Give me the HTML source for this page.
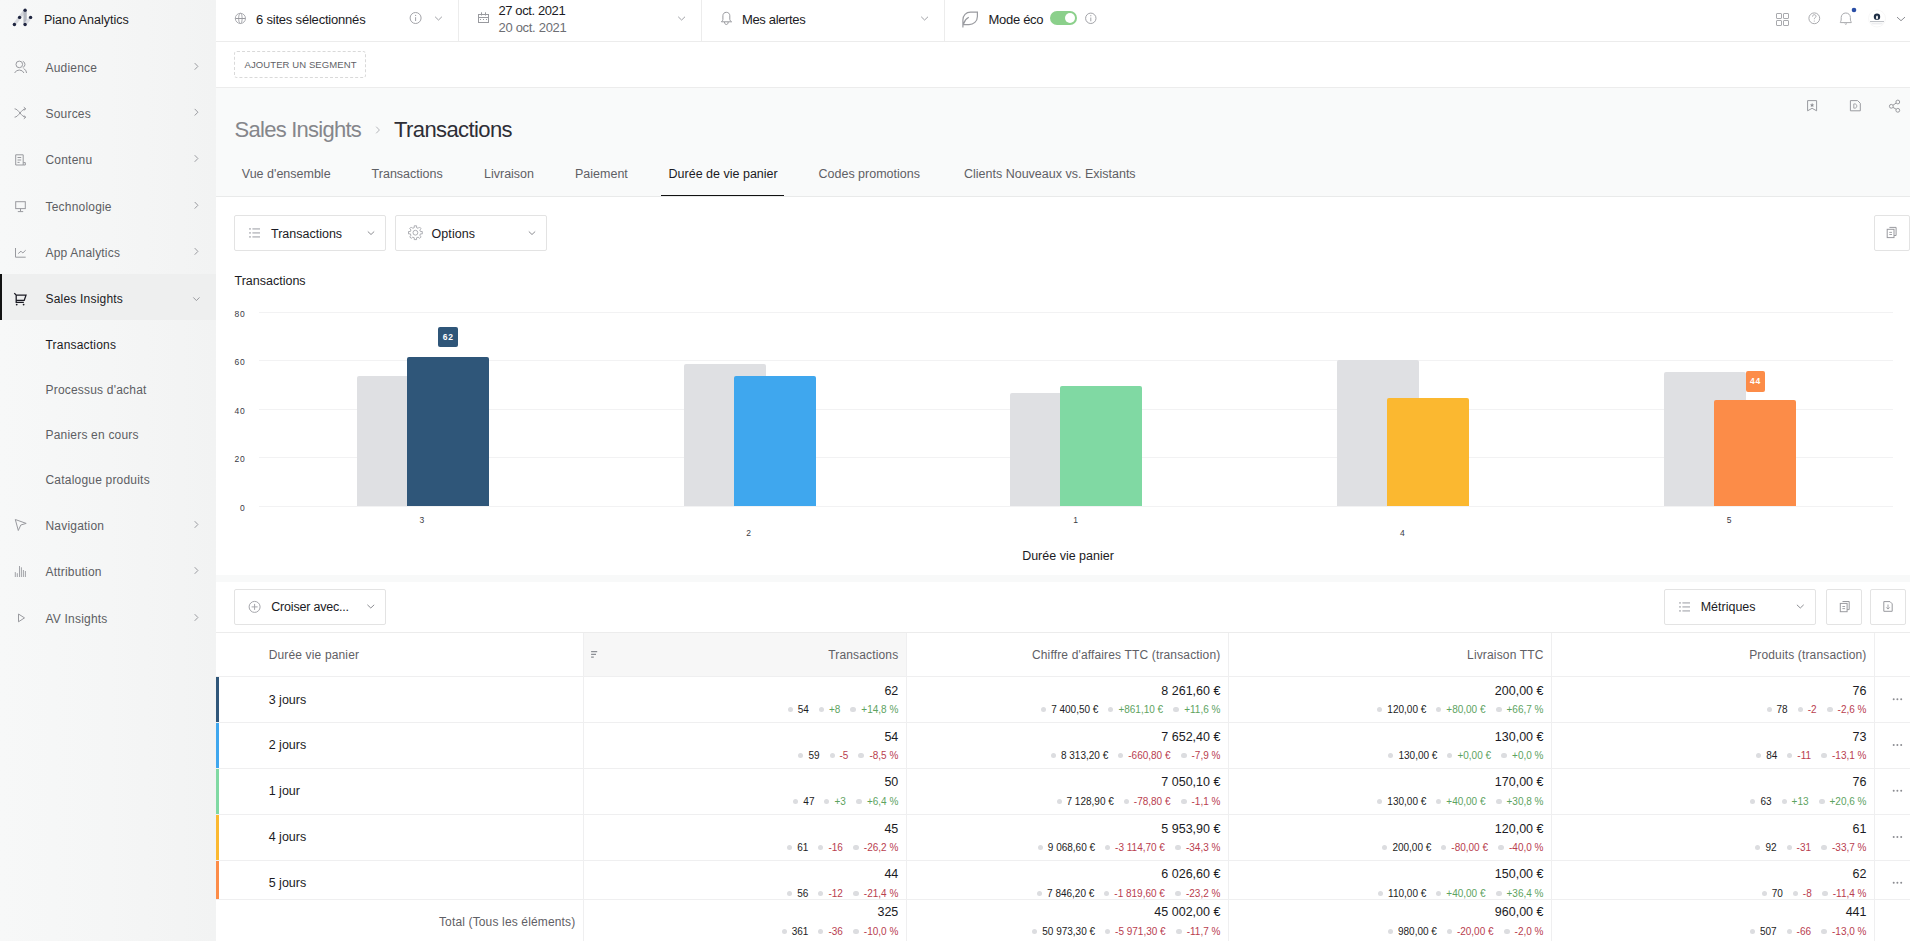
<!DOCTYPE html>
<html><head><meta charset="utf-8"><title>Piano Analytics</title>
<style>
html,body{margin:0;padding:0;width:1910px;height:941px;overflow:hidden;background:#fff;font-family:"Liberation Sans", sans-serif;}
.t{position:absolute;white-space:nowrap;}
.b{position:absolute;box-sizing:border-box;}
svg.b{overflow:visible;}
.sub{font-size:10px;line-height:10px;}
.sub i{display:inline-block;width:5px;height:5px;border-radius:2.5px;background:#dcdde0;margin:0 5px 0 10px;vertical-align:1px;}
.sub i.d1{margin-left:0;}
.sub i.d3{width:6px;}
</style></head><body>
<div class="b" style="left:0px;top:0px;width:216px;height:941px;background:linear-gradient(90deg,#f7f8f8 0%,#f5f6f6 50%,#f2f3f3 100%);"></div><div class="b" style="left:216px;top:0px;width:1694px;height:42px;background:#fff;border-bottom:1px solid #ececec;"></div><div class="b" style="left:216px;top:42px;width:1694px;height:46px;background:#fff;border-bottom:1px solid #ececec;"></div><div class="b" style="left:216px;top:88px;width:1694px;height:109px;background:#f9fafa;border-bottom:1px solid #e9eaea;"></div><div class="b" style="left:216px;top:197px;width:1694px;height:378px;background:#fff;"></div><div class="b" style="left:216px;top:575px;width:1694px;height:7px;background:#f8f9f9;"></div><div class="b" style="left:216px;top:582px;width:1694px;height:359px;background:#fff;"></div><div class="t" style="top:13.62px;font-size:12.5px;line-height:12.5px;color:#1b1b24;left:44.00px;">Piano Analytics</div><div class="t" style="top:61.74px;font-size:12px;line-height:12px;color:#5d5e63;letter-spacing:0.2px;left:45.50px;">Audience</div><div class="t" style="top:107.54px;font-size:12px;line-height:12px;color:#5d5e63;letter-spacing:0.2px;left:45.50px;">Sources</div><div class="t" style="top:153.84px;font-size:12px;line-height:12px;color:#5d5e63;letter-spacing:0.2px;left:45.50px;">Contenu</div><div class="t" style="top:200.64px;font-size:12px;line-height:12px;color:#5d5e63;letter-spacing:0.2px;left:45.50px;">Technologie</div><div class="t" style="top:246.74px;font-size:12px;line-height:12px;color:#5d5e63;letter-spacing:0.2px;left:45.50px;">App Analytics</div><div class="b" style="left:0px;top:274px;width:216px;height:46px;background:#eeefef;"></div><div class="b" style="left:0px;top:274px;width:2px;height:46px;background:#111;"></div><div class="t" style="top:292.84px;font-size:12px;line-height:12px;color:#1b1b24;letter-spacing:0.2px;left:45.50px;">Sales Insights</div><div class="t" style="top:338.54px;font-size:12px;line-height:12px;color:#1b1b24;letter-spacing:0.2px;left:45.50px;">Transactions</div><div class="t" style="top:384.24px;font-size:12px;line-height:12px;color:#5d5e63;letter-spacing:0.2px;left:45.50px;">Processus d&#x27;achat</div><div class="t" style="top:429.24px;font-size:12px;line-height:12px;color:#5d5e63;letter-spacing:0.2px;left:45.50px;">Paniers en cours</div><div class="t" style="top:474.04px;font-size:12px;line-height:12px;color:#5d5e63;letter-spacing:0.2px;left:45.50px;">Catalogue produits</div><div class="t" style="top:519.84px;font-size:12px;line-height:12px;color:#5d5e63;letter-spacing:0.2px;left:45.50px;">Navigation</div><div class="t" style="top:565.84px;font-size:12px;line-height:12px;color:#5d5e63;letter-spacing:0.2px;left:45.50px;">Attribution</div><div class="t" style="top:612.84px;font-size:12px;line-height:12px;color:#5d5e63;letter-spacing:0.2px;left:45.50px;">AV Insights</div><div class="t" style="top:13.00px;font-size:13px;line-height:13px;color:#1b1b24;letter-spacing:-0.2px;left:256.00px;">6 sites sélectionnés</div><div class="b" style="left:458px;top:0px;width:1px;height:41px;background:#ececec;"></div><div class="t" style="top:4.00px;font-size:13px;line-height:13px;color:#1b1b24;letter-spacing:-0.4px;left:498.50px;">27 oct. 2021</div><div class="t" style="top:20.80px;font-size:13px;line-height:13px;color:#6d6e73;letter-spacing:-0.3px;left:498.50px;">20 oct. 2021</div><div class="b" style="left:701px;top:0px;width:1px;height:41px;background:#ececec;"></div><div class="t" style="top:13.00px;font-size:13px;line-height:13px;color:#1b1b24;letter-spacing:-0.35px;left:742.00px;">Mes alertes</div><div class="b" style="left:944px;top:0px;width:1px;height:41px;background:#ececec;"></div><div class="t" style="top:13.00px;font-size:13px;line-height:13px;color:#1b1b24;letter-spacing:-0.3px;left:988.50px;">Mode éco</div><div class="b" style="left:1050px;top:11px;width:27px;height:14px;background:#8bd08b;border-radius:7px;"></div><div class="b" style="left:1065px;top:13px;width:10px;height:10px;background:#fff;border-radius:50%;"></div><div class="b" style="left:234px;top:51px;width:132px;height:27px;border:1px dashed #d9d9d9;border-radius:3px;"></div><div class="t" style="top:60.26px;font-size:9.5px;line-height:9.5px;color:#606166;letter-spacing:0.1px;left:244.50px;">AJOUTER UN SEGMENT</div><div class="t" style="top:118.58px;font-size:22px;line-height:22px;color:#85868b;letter-spacing:-0.75px;left:234.60px;">Sales Insights</div><div class="t" style="top:118.58px;font-size:22px;line-height:22px;color:#2e2e36;letter-spacing:-0.6px;left:394.00px;">Transactions</div><div class="t" style="top:167.62px;font-size:12.5px;line-height:12.5px;color:#5f6065;left:241.80px;">Vue d&#x27;ensemble</div><div class="t" style="top:167.62px;font-size:12.5px;line-height:12.5px;color:#5f6065;left:371.60px;">Transactions</div><div class="t" style="top:167.62px;font-size:12.5px;line-height:12.5px;color:#5f6065;left:484.00px;">Livraison</div><div class="t" style="top:167.62px;font-size:12.5px;line-height:12.5px;color:#5f6065;left:575.00px;">Paiement</div><div class="t" style="top:167.62px;font-size:12.5px;line-height:12.5px;color:#1b1b24;left:668.60px;">Durée de vie panier</div><div class="t" style="top:167.62px;font-size:12.5px;line-height:12.5px;color:#5f6065;left:818.50px;">Codes promotions</div><div class="t" style="top:167.62px;font-size:12.5px;line-height:12.5px;color:#5f6065;left:964.00px;">Clients Nouveaux vs. Existants</div><div class="b" style="left:661px;top:194.8px;width:123px;height:1.6px;background:#111;"></div><div class="b" style="left:234px;top:215px;width:152px;height:36px;border:1px solid #e3e3e3;border-radius:2px;background:#fff;"></div><div class="t" style="top:227.72px;font-size:12.5px;line-height:12.5px;color:#1b1b24;left:271.00px;">Transactions</div><div class="b" style="left:395px;top:215px;width:152px;height:36px;border:1px solid #e3e3e3;border-radius:2px;background:#fff;"></div><div class="t" style="top:227.72px;font-size:12.5px;line-height:12.5px;color:#1b1b24;letter-spacing:0.05px;left:431.60px;">Options</div><div class="b" style="left:1873.5px;top:215px;width:36px;height:36px;border:1px solid #e3e3e3;border-radius:2px;background:#fff;"></div><div class="t" style="top:274.62px;font-size:12.5px;line-height:12.5px;color:#1b1b24;left:234.50px;">Transactions</div><div class="b" style="left:259px;top:506px;width:1634px;height:1px;background:#f2f2f3;"></div><div class="t" style="top:503.60px;font-size:8.5px;line-height:8.5px;color:#3a3a44;letter-spacing:0.9px;right:1664.30px;">0</div><div class="b" style="left:259px;top:457px;width:1634px;height:1px;background:#f2f2f3;"></div><div class="t" style="top:455.10px;font-size:8.5px;line-height:8.5px;color:#3a3a44;letter-spacing:0.9px;right:1664.30px;">20</div><div class="b" style="left:259px;top:409px;width:1634px;height:1px;background:#f2f2f3;"></div><div class="t" style="top:406.60px;font-size:8.5px;line-height:8.5px;color:#3a3a44;letter-spacing:0.9px;right:1664.30px;">40</div><div class="b" style="left:259px;top:360px;width:1634px;height:1px;background:#f2f2f3;"></div><div class="t" style="top:358.10px;font-size:8.5px;line-height:8.5px;color:#3a3a44;letter-spacing:0.9px;right:1664.30px;">60</div><div class="b" style="left:259px;top:312px;width:1634px;height:1px;background:#f2f2f3;"></div><div class="t" style="top:309.60px;font-size:8.5px;line-height:8.5px;color:#3a3a44;letter-spacing:0.9px;right:1664.30px;">80</div><div class="b" style="left:356.5px;top:376.4px;width:82px;height:129.6px;background:#dfe0e3;border-radius:2px 2px 0 0;"></div><div class="b" style="left:407px;top:357.20000000000005px;width:82px;height:148.79999999999998px;background:#2f5679;border-radius:2px 2px 0 0;"></div><div class="t" style="top:516.30px;font-size:8.5px;line-height:8.5px;color:#3a3a44;letter-spacing:0.9px;left:422.40px;transform:translateX(-50%);">3</div><div class="b" style="left:683.5px;top:364.4px;width:82px;height:141.6px;background:#dfe0e3;border-radius:2px 2px 0 0;"></div><div class="b" style="left:734px;top:376.4px;width:82px;height:129.6px;background:#3fa7ee;border-radius:2px 2px 0 0;"></div><div class="t" style="top:528.50px;font-size:8.5px;line-height:8.5px;color:#3a3a44;letter-spacing:0.9px;left:749.20px;transform:translateX(-50%);">2</div><div class="b" style="left:1010.0px;top:393.2px;width:82px;height:112.8px;background:#dfe0e3;border-radius:2px 2px 0 0;"></div><div class="b" style="left:1060px;top:386.0px;width:82px;height:120.0px;background:#80d9a3;border-radius:2px 2px 0 0;"></div><div class="t" style="top:516.30px;font-size:8.5px;line-height:8.5px;color:#3a3a44;letter-spacing:0.9px;left:1076.00px;transform:translateX(-50%);">1</div><div class="b" style="left:1337.0px;top:359.6px;width:82px;height:146.4px;background:#dfe0e3;border-radius:2px 2px 0 0;"></div><div class="b" style="left:1387px;top:398.0px;width:82px;height:108.0px;background:#fbb830;border-radius:2px 2px 0 0;"></div><div class="t" style="top:528.50px;font-size:8.5px;line-height:8.5px;color:#3a3a44;letter-spacing:0.9px;left:1402.80px;transform:translateX(-50%);">4</div><div class="b" style="left:1664.0px;top:371.6px;width:82px;height:134.4px;background:#dfe0e3;border-radius:2px 2px 0 0;"></div><div class="b" style="left:1714px;top:400.4px;width:82px;height:105.6px;background:#fc8c48;border-radius:2px 2px 0 0;"></div><div class="t" style="top:516.30px;font-size:8.5px;line-height:8.5px;color:#3a3a44;letter-spacing:0.9px;left:1729.60px;transform:translateX(-50%);">5</div><div class="b" style="left:438px;top:327px;width:20px;height:20px;background:#2f5679;border-radius:2px;"></div><div class="t" style="top:333.00px;font-size:8.5px;line-height:8.5px;color:#fff;letter-spacing:0.9px;font-weight:700;left:448.30px;transform:translateX(-50%);">62</div><div class="b" style="left:1745.5px;top:371px;width:19.5px;height:20.5px;background:#fc8c48;border-radius:2px;"></div><div class="t" style="top:377.00px;font-size:8.5px;line-height:8.5px;color:#fff;letter-spacing:0.9px;font-weight:700;left:1755.60px;transform:translateX(-50%);">44</div><div class="t" style="top:550.42px;font-size:12.5px;line-height:12.5px;color:#1b1b24;left:1068.00px;transform:translateX(-50%);">Durée vie panier</div><div class="b" style="left:234px;top:589px;width:152px;height:36px;border:1px solid #e3e3e3;border-radius:2px;background:#fff;"></div><div class="t" style="top:601.42px;font-size:12.5px;line-height:12.5px;color:#1b1b24;letter-spacing:-0.2px;left:271.30px;">Croiser avec...</div><div class="b" style="left:1664px;top:589px;width:152px;height:36px;border:1px solid #e3e3e3;border-radius:2px;background:#fff;"></div><div class="t" style="top:601.42px;font-size:12.5px;line-height:12.5px;color:#1b1b24;left:1700.70px;">Métriques</div><div class="b" style="left:1826px;top:589px;width:36px;height:36px;border:1px solid #e3e3e3;border-radius:2px;background:#fff;"></div><div class="b" style="left:1870px;top:589px;width:36px;height:36px;border:1px solid #e3e3e3;border-radius:2px;background:#fff;"></div><div class="b" style="left:216px;top:632px;width:1694px;height:1px;background:#ececec;"></div><div class="b" style="left:584px;top:633px;width:322px;height:44px;background:#f7f7f7;"></div><div class="b" style="left:216px;top:676px;width:1694px;height:1px;background:#efeff0;"></div><div class="b" style="left:216px;top:722px;width:1694px;height:1px;background:#efeff0;"></div><div class="b" style="left:216px;top:768px;width:1694px;height:1px;background:#efeff0;"></div><div class="b" style="left:216px;top:814px;width:1694px;height:1px;background:#efeff0;"></div><div class="b" style="left:216px;top:860px;width:1694px;height:1px;background:#efeff0;"></div><div class="b" style="left:216px;top:899px;width:1694px;height:1px;background:#efeff0;"></div><div class="b" style="left:583px;top:633px;width:1px;height:308px;background:#efeff0;"></div><div class="b" style="left:906px;top:633px;width:1px;height:308px;background:#efeff0;"></div><div class="b" style="left:1228px;top:633px;width:1px;height:308px;background:#efeff0;"></div><div class="b" style="left:1551px;top:633px;width:1px;height:308px;background:#efeff0;"></div><div class="b" style="left:1874px;top:633px;width:1px;height:308px;background:#efeff0;"></div><div class="t" style="top:649.04px;font-size:12px;line-height:12px;color:#5f6065;letter-spacing:0.15px;left:268.70px;">Durée vie panier</div><div class="t" style="top:649.04px;font-size:12px;line-height:12px;color:#5f6065;letter-spacing:0.15px;right:1011.70px;">Transactions</div><div class="t" style="top:649.04px;font-size:12px;line-height:12px;color:#5f6065;letter-spacing:0.15px;right:689.60px;">Chiffre d&#x27;affaires TTC (transaction)</div><div class="t" style="top:649.04px;font-size:12px;line-height:12px;color:#5f6065;letter-spacing:0.15px;right:366.50px;">Livraison TTC</div><div class="t" style="top:649.04px;font-size:12px;line-height:12px;color:#5f6065;letter-spacing:0.15px;right:43.50px;">Produits (transaction)</div><div class="b" style="left:216px;top:677px;width:3px;height:44.799999999999955px;background:#2f5679;"></div><div class="t" style="top:693.62px;font-size:12.5px;line-height:12.5px;color:#1b1b24;left:268.70px;">3 jours</div><div class="t" style="top:684.82px;font-size:12.5px;line-height:12.5px;color:#1b1b24;right:1011.70px;">62</div><div class="t sub" style="right:1011.70px;top:705.40px;"><i class="d1"></i><span style="color:#1d1d24">54</span><i class="d2"></i><span style="color:#5ea35f">+8</span><i class="d3"></i><span style="color:#5ea35f">+14,8 %</span></div><div class="t" style="top:684.82px;font-size:12.5px;line-height:12.5px;color:#1b1b24;right:689.60px;">8 261,60 €</div><div class="t sub" style="right:689.60px;top:705.40px;"><i class="d1"></i><span style="color:#1d1d24">7 400,50 €</span><i class="d2"></i><span style="color:#5ea35f">+861,10 €</span><i class="d3"></i><span style="color:#5ea35f">+11,6 %</span></div><div class="t" style="top:684.82px;font-size:12.5px;line-height:12.5px;color:#1b1b24;right:366.50px;">200,00 €</div><div class="t sub" style="right:366.50px;top:705.40px;"><i class="d1"></i><span style="color:#1d1d24">120,00 €</span><i class="d2"></i><span style="color:#5ea35f">+80,00 €</span><i class="d3"></i><span style="color:#5ea35f">+66,7 %</span></div><div class="t" style="top:684.82px;font-size:12.5px;line-height:12.5px;color:#1b1b24;right:43.50px;">76</div><div class="t sub" style="right:43.50px;top:705.40px;"><i class="d1"></i><span style="color:#1d1d24">78</span><i class="d2"></i><span style="color:#b9404f">-2</span><i class="d3"></i><span style="color:#b9404f">-2,6 %</span></div><div class="b" style="left:216px;top:723px;width:3px;height:44.799999999999955px;background:#3fa7ee;"></div><div class="t" style="top:739.42px;font-size:12.5px;line-height:12.5px;color:#1b1b24;left:268.70px;">2 jours</div><div class="t" style="top:730.62px;font-size:12.5px;line-height:12.5px;color:#1b1b24;right:1011.70px;">54</div><div class="t sub" style="right:1011.70px;top:751.20px;"><i class="d1"></i><span style="color:#1d1d24">59</span><i class="d2"></i><span style="color:#b9404f">-5</span><i class="d3"></i><span style="color:#b9404f">-8,5 %</span></div><div class="t" style="top:730.62px;font-size:12.5px;line-height:12.5px;color:#1b1b24;right:689.60px;">7 652,40 €</div><div class="t sub" style="right:689.60px;top:751.20px;"><i class="d1"></i><span style="color:#1d1d24">8 313,20 €</span><i class="d2"></i><span style="color:#b9404f">-660,80 €</span><i class="d3"></i><span style="color:#b9404f">-7,9 %</span></div><div class="t" style="top:730.62px;font-size:12.5px;line-height:12.5px;color:#1b1b24;right:366.50px;">130,00 €</div><div class="t sub" style="right:366.50px;top:751.20px;"><i class="d1"></i><span style="color:#1d1d24">130,00 €</span><i class="d2"></i><span style="color:#5ea35f">+0,00 €</span><i class="d3"></i><span style="color:#5ea35f">+0,0 %</span></div><div class="t" style="top:730.62px;font-size:12.5px;line-height:12.5px;color:#1b1b24;right:43.50px;">73</div><div class="t sub" style="right:43.50px;top:751.20px;"><i class="d1"></i><span style="color:#1d1d24">84</span><i class="d2"></i><span style="color:#b9404f">-11</span><i class="d3"></i><span style="color:#b9404f">-13,1 %</span></div><div class="b" style="left:216px;top:769px;width:3px;height:45.10000000000002px;background:#80d9a3;"></div><div class="t" style="top:785.22px;font-size:12.5px;line-height:12.5px;color:#1b1b24;left:268.70px;">1 jour</div><div class="t" style="top:776.42px;font-size:12.5px;line-height:12.5px;color:#1b1b24;right:1011.70px;">50</div><div class="t sub" style="right:1011.70px;top:797.00px;"><i class="d1"></i><span style="color:#1d1d24">47</span><i class="d2"></i><span style="color:#5ea35f">+3</span><i class="d3"></i><span style="color:#5ea35f">+6,4 %</span></div><div class="t" style="top:776.42px;font-size:12.5px;line-height:12.5px;color:#1b1b24;right:689.60px;">7 050,10 €</div><div class="t sub" style="right:689.60px;top:797.00px;"><i class="d1"></i><span style="color:#1d1d24">7 128,90 €</span><i class="d2"></i><span style="color:#b9404f">-78,80 €</span><i class="d3"></i><span style="color:#b9404f">-1,1 %</span></div><div class="t" style="top:776.42px;font-size:12.5px;line-height:12.5px;color:#1b1b24;right:366.50px;">170,00 €</div><div class="t sub" style="right:366.50px;top:797.00px;"><i class="d1"></i><span style="color:#1d1d24">130,00 €</span><i class="d2"></i><span style="color:#5ea35f">+40,00 €</span><i class="d3"></i><span style="color:#5ea35f">+30,8 %</span></div><div class="t" style="top:776.42px;font-size:12.5px;line-height:12.5px;color:#1b1b24;right:43.50px;">76</div><div class="t sub" style="right:43.50px;top:797.00px;"><i class="d1"></i><span style="color:#1d1d24">63</span><i class="d2"></i><span style="color:#5ea35f">+13</span><i class="d3"></i><span style="color:#5ea35f">+20,6 %</span></div><div class="b" style="left:216px;top:815px;width:3px;height:44.89999999999998px;background:#fbb830;"></div><div class="t" style="top:831.32px;font-size:12.5px;line-height:12.5px;color:#1b1b24;left:268.70px;">4 jours</div><div class="t" style="top:822.52px;font-size:12.5px;line-height:12.5px;color:#1b1b24;right:1011.70px;">45</div><div class="t sub" style="right:1011.70px;top:843.10px;"><i class="d1"></i><span style="color:#1d1d24">61</span><i class="d2"></i><span style="color:#b9404f">-16</span><i class="d3"></i><span style="color:#b9404f">-26,2 %</span></div><div class="t" style="top:822.52px;font-size:12.5px;line-height:12.5px;color:#1b1b24;right:689.60px;">5 953,90 €</div><div class="t sub" style="right:689.60px;top:843.10px;"><i class="d1"></i><span style="color:#1d1d24">9 068,60 €</span><i class="d2"></i><span style="color:#b9404f">-3 114,70 €</span><i class="d3"></i><span style="color:#b9404f">-34,3 %</span></div><div class="t" style="top:822.52px;font-size:12.5px;line-height:12.5px;color:#1b1b24;right:366.50px;">120,00 €</div><div class="t sub" style="right:366.50px;top:843.10px;"><i class="d1"></i><span style="color:#1d1d24">200,00 €</span><i class="d2"></i><span style="color:#b9404f">-80,00 €</span><i class="d3"></i><span style="color:#b9404f">-40,0 %</span></div><div class="t" style="top:822.52px;font-size:12.5px;line-height:12.5px;color:#1b1b24;right:43.50px;">61</div><div class="t sub" style="right:43.50px;top:843.10px;"><i class="d1"></i><span style="color:#1d1d24">92</span><i class="d2"></i><span style="color:#b9404f">-31</span><i class="d3"></i><span style="color:#b9404f">-33,7 %</span></div><div class="b" style="left:216px;top:861px;width:3px;height:38.0px;background:#fc8c48;"></div><div class="t" style="top:877.22px;font-size:12.5px;line-height:12.5px;color:#1b1b24;left:268.70px;">5 jours</div><div class="t" style="top:868.42px;font-size:12.5px;line-height:12.5px;color:#1b1b24;right:1011.70px;">44</div><div class="t sub" style="right:1011.70px;top:889.00px;"><i class="d1"></i><span style="color:#1d1d24">56</span><i class="d2"></i><span style="color:#b9404f">-12</span><i class="d3"></i><span style="color:#b9404f">-21,4 %</span></div><div class="t" style="top:868.42px;font-size:12.5px;line-height:12.5px;color:#1b1b24;right:689.60px;">6 026,60 €</div><div class="t sub" style="right:689.60px;top:889.00px;"><i class="d1"></i><span style="color:#1d1d24">7 846,20 €</span><i class="d2"></i><span style="color:#b9404f">-1 819,60 €</span><i class="d3"></i><span style="color:#b9404f">-23,2 %</span></div><div class="t" style="top:868.42px;font-size:12.5px;line-height:12.5px;color:#1b1b24;right:366.50px;">150,00 €</div><div class="t sub" style="right:366.50px;top:889.00px;"><i class="d1"></i><span style="color:#1d1d24">110,00 €</span><i class="d2"></i><span style="color:#5ea35f">+40,00 €</span><i class="d3"></i><span style="color:#5ea35f">+36,4 %</span></div><div class="t" style="top:868.42px;font-size:12.5px;line-height:12.5px;color:#1b1b24;right:43.50px;">62</div><div class="t sub" style="right:43.50px;top:889.00px;"><i class="d1"></i><span style="color:#1d1d24">70</span><i class="d2"></i><span style="color:#b9404f">-8</span><i class="d3"></i><span style="color:#b9404f">-11,4 %</span></div><div class="t" style="top:915.74px;font-size:12px;line-height:12px;color:#5f6065;letter-spacing:0.15px;right:1334.60px;">Total (Tous les éléments)</div><div class="t" style="top:906.42px;font-size:12.5px;line-height:12.5px;color:#1b1b24;right:1011.70px;">325</div><div class="t sub" style="right:1011.70px;top:927.10px;"><i class="d1"></i><span style="color:#1d1d24">361</span><i class="d2"></i><span style="color:#b9404f">-36</span><i class="d3"></i><span style="color:#b9404f">-10,0 %</span></div><div class="t" style="top:906.42px;font-size:12.5px;line-height:12.5px;color:#1b1b24;right:689.60px;">45 002,00 €</div><div class="t sub" style="right:689.60px;top:927.10px;"><i class="d1"></i><span style="color:#1d1d24">50 973,30 €</span><i class="d2"></i><span style="color:#b9404f">-5 971,30 €</span><i class="d3"></i><span style="color:#b9404f">-11,7 %</span></div><div class="t" style="top:906.42px;font-size:12.5px;line-height:12.5px;color:#1b1b24;right:366.50px;">960,00 €</div><div class="t sub" style="right:366.50px;top:927.10px;"><i class="d1"></i><span style="color:#1d1d24">980,00 €</span><i class="d2"></i><span style="color:#b9404f">-20,00 €</span><i class="d3"></i><span style="color:#b9404f">-2,0 %</span></div><div class="t" style="top:906.42px;font-size:12.5px;line-height:12.5px;color:#1b1b24;right:43.50px;">441</div><div class="t sub" style="right:43.50px;top:927.10px;"><i class="d1"></i><span style="color:#1d1d24">507</span><i class="d2"></i><span style="color:#b9404f">-66</span><i class="d3"></i><span style="color:#b9404f">-13,0 %</span></div><svg class="b" style="left:0;top:0" width="1910" height="941" viewBox="0 0 1910 941"><line x1="14.4" y1="24.5" x2="25.1" y2="10.25" stroke="#d6d8dd" stroke-width="3"/><line x1="25.1" y1="10.25" x2="25.1" y2="24.5" stroke="#b3b7c0" stroke-width="3.3"/><line x1="25.1" y1="24.5" x2="30.6" y2="17.4" stroke="#dcdee3" stroke-width="3"/><circle cx="14.4" cy="24.5" r="1.7" fill="#1f2540"/><circle cx="19.6" cy="17.4" r="1.7" fill="#1f2540"/><circle cx="25.1" cy="10.25" r="1.7" fill="#1f2540"/><circle cx="25.1" cy="24.5" r="1.7" fill="#1f2540"/><circle cx="30.6" cy="17.4" r="1.7" fill="#1f2540"/><circle cx="19.3" cy="64.4" r="3.3" stroke="#999a9f" stroke-width="1" fill="none"/><path d="M22.8 61.3 A3.3 3.3 0 0 1 22.8 67.5" stroke="#999a9f" stroke-width="1" fill="none"/><path d="M14.6 73 A5.2 5.2 0 0 1 24 73" stroke="#999a9f" stroke-width="1" fill="none"/><path d="M23.6 68.6 A5 5 0 0 1 26.6 73" stroke="#999a9f" stroke-width="1" fill="none"/><path d="M14.6 108.8 C18.5 108.8 21.5 117.2 25.6 117.2 M14.6 117.2 C18.5 117.2 21.5 108.8 25.6 108.8" stroke="#999a9f" stroke-width="1" fill="none"/><path d="M23.8 107.2 L25.8 108.8 L23.8 110.4 M23.8 115.6 L25.8 117.2 L23.8 118.8" stroke="#999a9f" stroke-width="1" fill="none"/><path d="M15.7 154.8 H23.2 V165 H15.7 Z" stroke="#999a9f" stroke-width="1" fill="none"/><path d="M23.2 162.6 H25.3 V165 H23.2" stroke="#999a9f" stroke-width="1" fill="none"/><path d="M17.5 157.5 H21.2 M17.5 160 H21.2 M17.5 162.4 H19.6" stroke="#999a9f" stroke-width="1" fill="none"/><rect x="15.7" y="201.7" width="9.6" height="6.9" stroke="#999a9f" stroke-width="1" fill="none"/><path d="M20.5 208.6 V211.3 M17.8 211.6 H23.2" stroke="#999a9f" stroke-width="1" fill="none"/><path d="M15.5 248 V257.2 H25.7" stroke="#999a9f" stroke-width="1" fill="none"/><polyline points="18.2,253.6 21,251.2 22.8,253 25.7,250.2" stroke="#999a9f" stroke-width="1" fill="none"/><path d="M14.3 293.1 L16.2 295.2 H26 L24.2 300.4 H16.6 M16.2 295.2 V302.4 H23.8" stroke="#1b1b24" stroke-width="1.3" fill="none"/><circle cx="16.7" cy="304.6" r="0.9" fill="#1b1b24"/><circle cx="23.6" cy="304.6" r="0.9" fill="#1b1b24"/><path d="M15.3 519.5 L26.2 523.4 L20.8 525 L18.3 530.5 Z" stroke="#999a9f" stroke-width="1" fill="none"/><line x1="15.3" y1="572.1" x2="15.3" y2="577" stroke="#999a9f" stroke-width="0.9"/><line x1="17.3" y1="573.2" x2="17.3" y2="577" stroke="#999a9f" stroke-width="0.9"/><line x1="19.5" y1="566" x2="19.5" y2="577" stroke="#999a9f" stroke-width="0.9"/><line x1="21.4" y1="567.3" x2="21.4" y2="577" stroke="#999a9f" stroke-width="0.9"/><line x1="23.4" y1="570" x2="23.4" y2="577" stroke="#999a9f" stroke-width="0.9"/><line x1="25.4" y1="571" x2="25.4" y2="577" stroke="#999a9f" stroke-width="0.9"/><path d="M18.5 614 L24.5 617.9 L18.5 621.8 Z" stroke="#999a9f" stroke-width="1" fill="none"/><polyline points="194.7,63.10000000000001 197.89999999999998,66.4 194.7,69.7" stroke="#9a9ba0" stroke-width="1" fill="none"/><polyline points="194.7,108.9 197.89999999999998,112.2 194.7,115.5" stroke="#9a9ba0" stroke-width="1" fill="none"/><polyline points="194.7,155.2 197.89999999999998,158.5 194.7,161.8" stroke="#9a9ba0" stroke-width="1" fill="none"/><polyline points="194.7,202.0 197.89999999999998,205.3 194.7,208.60000000000002" stroke="#9a9ba0" stroke-width="1" fill="none"/><polyline points="194.7,248.1 197.89999999999998,251.4 194.7,254.70000000000002" stroke="#9a9ba0" stroke-width="1" fill="none"/><polyline points="194.7,521.2 197.89999999999998,524.5 194.7,527.8" stroke="#9a9ba0" stroke-width="1" fill="none"/><polyline points="194.7,567.2 197.89999999999998,570.5 194.7,573.8" stroke="#9a9ba0" stroke-width="1" fill="none"/><polyline points="194.7,614.2 197.89999999999998,617.5 194.7,620.8" stroke="#9a9ba0" stroke-width="1" fill="none"/><polyline points="193.3,297.4 196.4,300.6 199.5,297.4" stroke="#9a9ba0" stroke-width="1" fill="none"/><circle cx="240.4" cy="18.4" r="5.1" stroke="#a3a4a9" stroke-width="0.9" fill="none"/><ellipse cx="240.4" cy="18.4" rx="1.8" ry="5.1" stroke="#a3a4a9" stroke-width="0.9" fill="none"/><path d="M235.3 18.5 H245.5" stroke="#999a9f" stroke-width="1"/><circle cx="415.6" cy="18" r="5.5" stroke="#a2a3a8" stroke-width="1" fill="none"/><path d="M415.6 17.2 V21" stroke="#a2a3a8" stroke-width="1"/><circle cx="415.6" cy="15.4" r="0.6" fill="#a2a3a8"/><polyline points="435.1,16.75 438.5,20.049999999999997 441.9,16.75" stroke="#a0a1a6" stroke-width="1" fill="none"/><rect x="478.5" y="14.5" width="10" height="8" stroke="#999a9f" stroke-width="1" fill="none"/><path d="M478.5 17.5 H488.5 M481.5 12.3 V15.5 M485.5 12.3 V15.5" stroke="#999a9f" stroke-width="1" fill="none"/><rect x="480.0" y="19" width="1" height="1" fill="#999a9f"/><rect x="483.0" y="19" width="1" height="1" fill="#999a9f"/><rect x="486.0" y="19" width="1" height="1" fill="#999a9f"/><polyline points="678.2,16.75 681.6,20.049999999999997 685.0,16.75" stroke="#a0a1a6" stroke-width="1" fill="none"/><path d="M721.4 21.8 H731.6 M721.4 21.8 C722.9 20.5 722.9 19.8 722.9 19 V15.7 C722.9 13.7 724.3 12.3 726.35 12.3 C728.4 12.3 729.8 13.7 729.8 15.7 V19 C729.8 19.8 729.8 20.5 731.6 21.8 M724.5 22 C724.5 23.6 725.3 24.5 726.35 24.5 C727.4 24.5 728.2 23.6 728.2 22" stroke="#999a9f" stroke-width="1" fill="none"/><polyline points="921.2,16.75 924.6,20.049999999999997 928.0,16.75" stroke="#a0a1a6" stroke-width="1" fill="none"/><path d="M962.9 27.6 V20 C962.9 15.5 966 12.1 970.5 12.1 H977.4 V16.5 C977.4 21.5 973.5 24.6 969 24.6 H963.4 M963.6 23.8 C964.5 20.5 966.5 18.5 968.8 17.3" stroke="#9a9ba0" stroke-width="1.2" fill="none"/><circle cx="1090.8" cy="18.3" r="5.2" stroke="#a2a3a8" stroke-width="1" fill="none"/><path d="M1090.8 17.5 V21.3" stroke="#a2a3a8" stroke-width="1"/><circle cx="1090.8" cy="15.700000000000001" r="0.6" fill="#a2a3a8"/><rect x="1776.5" y="13.5" width="5" height="5" stroke="#a9aaae" stroke-width="1" fill="none" rx="0.5"/><rect x="1783.5" y="13.5" width="5" height="5" stroke="#a9aaae" stroke-width="1" fill="none" rx="0.5"/><rect x="1776.5" y="20.5" width="5" height="5" stroke="#a9aaae" stroke-width="1" fill="none" rx="0.5"/><rect x="1783.5" y="20.5" width="5" height="5" stroke="#a9aaae" stroke-width="1" fill="none" rx="0.5"/><circle cx="1814.3" cy="18.3" r="5.4" stroke="#a9aaae" stroke-width="1" fill="none"/><path d="M1812.6 16.6 C1812.6 15.2 1813.4 14.7 1814.3 14.7 C1815.3 14.7 1816 15.4 1816 16.3 C1816 17.6 1814.3 17.7 1814.3 19.2" stroke="#a9aaae" stroke-width="1" fill="none"/><circle cx="1814.3" cy="21" r="0.6" fill="#a9aaae"/><path d="M1840.3 22.6 H1851.3 V22 C1850.8 21.4 1850.4 20.6 1850.4 19 V17.5 C1850.4 14.9 1848.4 13 1845.8 13 C1843.2 13 1841.2 14.9 1841.2 17.5 V19 C1841.2 20.6 1840.8 21.4 1840.3 22 Z M1845 23.4 L1845.8 24.5 L1846.6 23.4" stroke="#a9aaae" stroke-width="1" fill="none"/><circle cx="1854" cy="10" r="2.3" fill="#2a4ea6"/><circle cx="1877" cy="18.5" r="8.5" fill="#fff" stroke="#f1f1f2" stroke-width="0.6"/><circle cx="1877" cy="16.7" r="3.2" fill="#1f2e44"/><ellipse cx="1877" cy="17.6" rx="1" ry="2" fill="#f4f5f7"/><path d="M1870 21.6 H1884" stroke="#b9bcc2" stroke-width="1"/><path d="M1871.5 23.8 H1882.5" stroke="#e3e5e8" stroke-width="0.9"/><polyline points="1897,17.099999999999998 1901,20.7 1905,17.099999999999998" stroke="#8d8e93" stroke-width="1" fill="none"/><polyline points="376.2,126.7 379.4,130 376.2,133.3" stroke="#b5b6ba" stroke-width="1" fill="none"/><path d="M1807.6 100.6 H1816.6 V110.8 L1812.1 108.3 L1807.6 110.8 Z" stroke="#999a9f" stroke-width="1" fill="none"/><path d="M1812.1 102.8 L1812.75 104.4 L1814.3 104.5 L1813.1 105.5 L1813.5 107.1 L1812.1 106.2 L1810.7 107.1 L1811.1 105.5 L1809.9 104.5 L1811.45 104.4 Z" fill="#8d8e93"/><path d="M1850.4 100.6 H1857.6 L1860.3 103.3 V110.8 H1850.4 Z" stroke="#999a9f" stroke-width="1" fill="none"/><path d="M1853.8 103.9 V108.2 H1854.6 C1856 108.2 1856.8 107.3 1856.8 106.05 C1856.8 104.8 1856 103.9 1854.6 103.9 Z" stroke="#999a9f" stroke-width="0.9" fill="none"/><circle cx="1891.3" cy="106.3" r="1.9" stroke="#999a9f" stroke-width="1" fill="none"/><circle cx="1897.8" cy="102" r="1.9" stroke="#999a9f" stroke-width="1" fill="none"/><circle cx="1897.8" cy="110.3" r="1.9" stroke="#999a9f" stroke-width="1" fill="none"/><path d="M1893 105.2 L1896.1 103.1 M1893 107.4 L1896.1 109.2" stroke="#999a9f" stroke-width="1" fill="none"/><path d="M249 228.9 H251 M252.4 228.9 H260" stroke="#c5c6ca" stroke-width="1.6"/><path d="M249 232.9 H251 M252.4 232.9 H260" stroke="#c5c6ca" stroke-width="1.6"/><path d="M249 236.9 H251 M252.4 236.9 H260" stroke="#c5c6ca" stroke-width="1.6"/><polyline points="367.8,231.5 371,234.5 374.2,231.5" stroke="#8d8e93" stroke-width="1" fill="none"/><polygon points="414.27,227.63 414.22,225.80 416.58,225.80 416.53,227.63 418.19,228.31 419.44,226.98 421.12,228.66 419.79,229.91 420.47,231.57 422.30,231.52 422.30,233.88 420.47,233.83 419.79,235.49 421.12,236.74 419.44,238.42 418.19,237.09 416.53,237.77 416.58,239.60 414.22,239.60 414.27,237.77 412.61,237.09 411.36,238.42 409.68,236.74 411.01,235.49 410.33,233.83 408.50,233.88 408.50,231.52 410.33,231.57 411.01,229.91 409.68,228.66 411.36,226.98 412.61,228.31" stroke="#a5a6ab" stroke-width="0.9" fill="none" stroke-linejoin="round"/><circle cx="415.4" cy="232.7" r="2.4" stroke="#a5a6ab" stroke-width="0.9" fill="none"/><polyline points="528.8,231.5 532,234.5 535.2,231.5" stroke="#8d8e93" stroke-width="1" fill="none"/><path d="M1889.4 227.4 H1896.1000000000001 V235.5 H1894.0" stroke="#999a9f" stroke-width="1" fill="none"/><rect x="1887.2" y="229.3" width="6.8" height="8.3" stroke="#999a9f" stroke-width="1" fill="none"/><path d="M1889.3 232.4 H1892.0 M1889.3 234.5 H1892.0" stroke="#999a9f" stroke-width="0.9"/><circle cx="254.6" cy="606.9" r="5.5" stroke="#a5a6ab" stroke-width="1" fill="none"/><path d="M254.6 603.9 V609.9 M251.6 606.9 H257.6" stroke="#a5a6ab" stroke-width="1"/><polyline points="367.40000000000003,604.8 370.8,608.0 374.2,604.8" stroke="#8d8e93" stroke-width="1" fill="none"/><path d="M1679 602.9 H1681 M1682.4 602.9 H1690" stroke="#c5c6ca" stroke-width="1.6"/><path d="M1679 606.9 H1681 M1682.4 606.9 H1690" stroke="#c5c6ca" stroke-width="1.6"/><path d="M1679 610.9 H1681 M1682.4 610.9 H1690" stroke="#c5c6ca" stroke-width="1.6"/><polyline points="1796.8999999999999,604.8 1800.3,608.0 1803.7,604.8" stroke="#8d8e93" stroke-width="1" fill="none"/><path d="M1842.5 601.5 H1849.2 V609.6 H1847.1" stroke="#999a9f" stroke-width="1" fill="none"/><rect x="1840.3" y="603.4" width="6.8" height="8.3" stroke="#999a9f" stroke-width="1" fill="none"/><path d="M1842.3999999999999 606.5 H1845.1 M1842.3999999999999 608.6 H1845.1" stroke="#999a9f" stroke-width="0.9"/><path d="M1883.8 601.6 H1890 L1892.2 603.8 V611.3 H1883.8 Z" stroke="#999a9f" stroke-width="1" fill="none"/><path d="M1888 604.5 V609 M1886.3 607.4 L1888 609.1 L1889.7 607.4" stroke="#999a9f" stroke-width="0.9" fill="none"/><path d="M591.1 651.6 H597.2 M591.1 654.4 H596 M591.1 657.1 H593.8" stroke="#8d9096" stroke-width="1.2"/><circle cx="1893.7" cy="699.2" r="1" fill="#8c8d92"/><circle cx="1897.4" cy="699.2" r="1" fill="#8c8d92"/><circle cx="1901.2" cy="699.2" r="1" fill="#8c8d92"/><circle cx="1893.7" cy="745.0" r="1" fill="#8c8d92"/><circle cx="1897.4" cy="745.0" r="1" fill="#8c8d92"/><circle cx="1901.2" cy="745.0" r="1" fill="#8c8d92"/><circle cx="1893.7" cy="790.8" r="1" fill="#8c8d92"/><circle cx="1897.4" cy="790.8" r="1" fill="#8c8d92"/><circle cx="1901.2" cy="790.8" r="1" fill="#8c8d92"/><circle cx="1893.7" cy="836.9" r="1" fill="#8c8d92"/><circle cx="1897.4" cy="836.9" r="1" fill="#8c8d92"/><circle cx="1901.2" cy="836.9" r="1" fill="#8c8d92"/><circle cx="1893.7" cy="882.8" r="1" fill="#8c8d92"/><circle cx="1897.4" cy="882.8" r="1" fill="#8c8d92"/><circle cx="1901.2" cy="882.8" r="1" fill="#8c8d92"/></svg>
</body></html>
